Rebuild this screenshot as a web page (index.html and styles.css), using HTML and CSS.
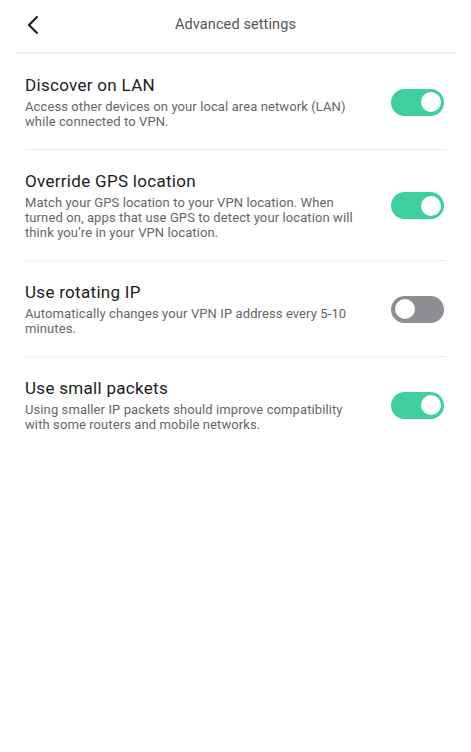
FILE: index.html
```html
<!DOCTYPE html>
<html lang="en">
<head>
    <meta charset="UTF-8">
    <title>Advanced settings</title>
    <link rel="stylesheet" href="styles.css">
</head>
<body>
    <div class="screen">
        <header class="topbar">
            <button class="back" aria-label="Back">
                <svg width="12" height="18" viewBox="0 0 12 18">
                    <path d="M10 1 L2 9 L10 17" fill="none" stroke="#1a1a1a" stroke-width="2" stroke-linecap="round" stroke-linejoin="round"/>
                </svg>
            </button>
            <h1>Advanced settings</h1>
        </header>

        <ul class="settings">
            <li class="setting">
                <div class="setting-text">
                    <h2>Discover on LAN</h2>
                    <p>Access other devices on your local area network (LAN) while connected to VPN.</p>
                </div>
                <span class="toggle on"></span>
            </li>
            <li class="setting">
                <div class="setting-text">
                    <h2>Override GPS location</h2>
                    <p>Match your GPS location to your VPN location. When turned on, apps that use GPS to detect your location will think you’re in your VPN location.</p>
                </div>
                <span class="toggle on"></span>
            </li>
            <li class="setting">
                <div class="setting-text">
                    <h2>Use rotating IP</h2>
                    <p>Automatically changes your VPN IP address every 5-10 minutes.</p>
                </div>
                <span class="toggle"></span>
            </li>
            <li class="setting">
                <div class="setting-text">
                    <h2>Use small packets</h2>
                    <p>Using smaller IP packets should improve compatibility with some routers and mobile networks.</p>
                </div>
                <span class="toggle on"></span>
            </li>
        </ul>
    </div>
</body>
</html>
```

FILE: styles.css
```css
* {
    margin: 0;
    padding: 0;
    box-sizing: border-box;
}

body {
    background: #ffffff;
    font-family: Roboto, "Noto Sans", sans-serif;
    color: #1f1f1f;
}

.screen {
    width: 471px;
    min-height: 752px;
    padding: 0 16px;
}

.topbar {
    position: relative;
    height: 54px;
    display: flex;
    align-items: center;
    justify-content: center;
    border-bottom: 2px solid #ececec;
}

.back {
    position: absolute;
    left: 11px;
    top: 16px;
    width: 12px;
    height: 18px;
    background: none;
    border: none;
    display: flex;
}

.topbar h1 {
    font-size: 14.5px;
    font-weight: 400;
    color: #555555;
    letter-spacing: 0.1px;
    margin-top: -3px;
}

.settings {
    list-style: none;
    padding: 0 9px;
}

.setting {
    display: flex;
    align-items: center;
    justify-content: space-between;
    padding: 21px 2px 20px 0;
    border-bottom: 1px solid #ececec;
}

.setting:last-child {
    border-bottom: none;
}

.setting-text {
    width: 340px;
}

.setting h2 {
    font-size: 17px;
    font-weight: 400;
    line-height: 20px;
    letter-spacing: 0.3px;
    color: #1c1c1c;
    margin-bottom: 4px;
}

.setting p {
    font-size: 13px;
    line-height: 15px;
    letter-spacing: 0.1px;
    color: #666666;
}

.toggle {
    position: relative;
    flex: none;
    width: 53px;
    height: 27px;
    border-radius: 14px;
    background: #8e8e93;
}

.toggle::after {
    content: "";
    position: absolute;
    top: 3.5px;
    left: 3.5px;
    width: 20px;
    height: 20px;
    border-radius: 50%;
    background: #ffffff;
}

.toggle.on {
    background: #3ecf9c;
}

.toggle.on::after {
    left: auto;
    right: 3.5px;
}
```
